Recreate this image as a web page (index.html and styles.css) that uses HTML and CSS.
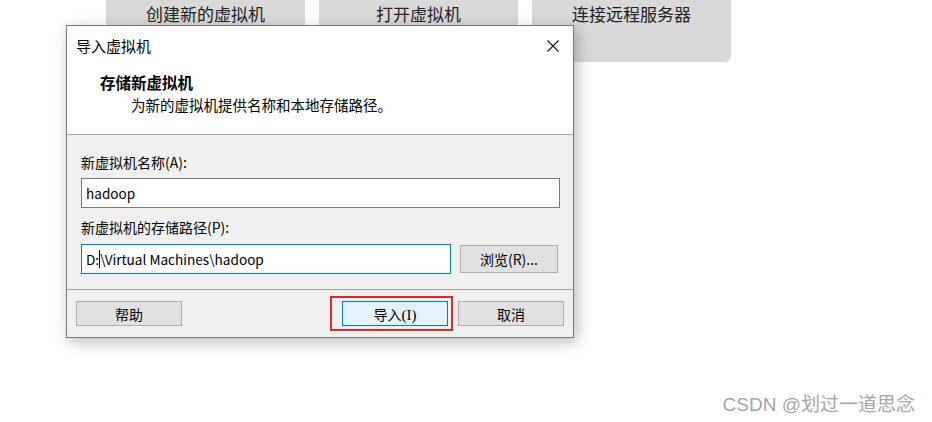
FILE: index.html
```html
<!DOCTYPE html>
<html lang="zh-CN">
<head>
    <meta charset="UTF-8">
    <meta name="viewport" content="width=device-width, initial-scale=1.0">
    <title>导入虚拟机</title>
    <link rel="stylesheet" href="styles.css">
</head>
<body>
    <!-- Tiles da tela inicial, atrás do diálogo -->
    <div class="home-tiles">
        <div class="tile">创建新的虚拟机</div>
        <div class="tile">打开虚拟机</div>
        <div class="tile">连接远程服务器</div>
    </div>

    <!-- Diálogo de importação -->
    <div class="dialog">
        <div class="title-bar">
            <span class="title-text">导入虚拟机</span>
            <svg class="close-icon" width="12" height="12" viewBox="0 0 12 12">
                <path d="M0.5 0.5 L11.5 11.5 M11.5 0.5 L0.5 11.5" stroke="#111" stroke-width="1.1" fill="none"/>
            </svg>
        </div>

        <div class="dialog-header">
            <div class="header-title">存储新虚拟机</div>
            <div class="header-sub">为新的虚拟机提供名称和本地存储路径。</div>
        </div>

        <div class="dialog-body">
            <div class="field-label">新虚拟机名称(A):</div>
            <div class="text-box">hadoop</div>

            <div class="field-label second">新虚拟机的存储路径(P):</div>
            <div class="path-row">
                <div class="text-box path-box focused">D:<span class="caret"></span>\Virtual Machines\hadoop</div>
                <button class="win-button browse">浏览(R)...</button>
            </div>
        </div>

        <div class="dialog-footer">
            <button class="win-button">帮助</button>
            <div class="highlight">
                <button class="win-button primary">导入<span class="serif">(I)</span></button>
            </div>
            <button class="win-button">取消</button>
        </div>
    </div>

    <div class="watermark">CSDN @划过一道思念</div>
</body>
</html>
```

FILE: styles.css
```css
* {
  margin: 0;
  padding: 0;
  box-sizing: border-box;
}

body {
  font-family: "Noto Sans CJK SC", "Noto Sans", sans-serif;
  background-color: #fff;
  color: #000;
  width: 932px;
  height: 422px;
  overflow: hidden;
  position: relative;
}

.home-tiles {
  display: flex;
  gap: 14px;
  padding-left: 106px;
}

.tile {
  width: 199px;
  height: 62px;
  background-color: #d9d9d9;
  border-radius: 0 0 6px 6px;
  text-align: center;
  font-size: 17px;
  line-height: 20px;
  padding-top: 4px;
  color: #222;
}

.dialog {
  position: absolute;
  left: 66px;
  top: 25px;
  width: 508px;
  height: 313px;
  border: 1px solid #7a7a7a;
  background-color: #f0f0f0;
  box-shadow: 3px 4px 14px rgba(0, 0, 0, 0.28);
  display: flex;
  flex-direction: column;
}

.title-bar {
  height: 39px;
  background-color: #fff;
  display: flex;
  align-items: center;
  justify-content: space-between;
  padding: 0 14px 0 9px;
  font-size: 15px;
}

.dialog-header {
  background-color: #fff;
  height: 70px;
  padding-top: 7px;
  border-bottom: 1px solid #a0a0a0;
}

.header-title {
  font-size: 15.5px;
  font-weight: bold;
  line-height: 20px;
  padding-left: 33px;
}

.header-sub {
  font-size: 14.5px;
  line-height: 20px;
  margin-top: 3px;
  padding-left: 64px;
}

.dialog-body {
  height: 155px;
  padding: 17px 13px 0 14px;
  border-bottom: 1px solid #a0a0a0;
  font-size: 14px;
}

.field-label {
  line-height: 20px;
}

.field-label.second {
  margin-top: 9px;
}

.text-box {
  height: 30px;
  margin-top: 6px;
  border: 1px solid #7a7a7a;
  background-color: #fff;
  padding-left: 4px;
  line-height: 28px;
  font-size: 13.6px;
}

.path-row {
  display: flex;
  align-items: center;
  gap: 9px;
  margin-top: 7px;
}

.path-box {
  width: 370px;
  margin-top: 0;
}

.text-box.focused {
  border-color: #0078d7;
}

.caret {
  display: inline-block;
  width: 1px;
  height: 18px;
  background-color: #000;
  vertical-align: -3px;
}

.win-button {
  font-family: inherit;
  font-size: 14px;
  width: 106px;
  height: 25px;
  background-color: #e1e1e1;
  border: 1px solid #adadad;
  color: #000;
}

.win-button.browse {
  width: 98px;
  height: 28px;
}

.win-button.primary {
  background-color: #e5f1fb;
  border-color: #0078d7;
  display: block;
}

.serif {
  font-family: "Liberation Serif", serif;
  font-size: 15px;
}

.dialog-footer {
  flex: 1;
  display: flex;
  align-items: center;
  padding: 0 9px;
}

.highlight {
  margin-left: auto;
  margin-right: 5px;
  border: 2px solid #e3242b;
  padding: 3px 3px 3px 10px;
}

.watermark {
  position: absolute;
  right: 17px;
  top: 389px;
  font-size: 19px;
  color: #a5a5a5;
  font-family: "Liberation Sans", "Noto Sans CJK SC", sans-serif;
}
```
